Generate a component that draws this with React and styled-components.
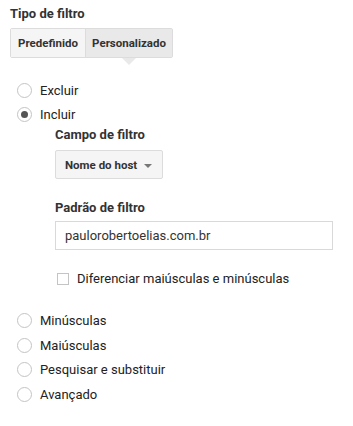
import React from 'react';
import styled, { createGlobalStyle } from 'styled-components';

const Global = createGlobalStyle`
  body {
    margin: 0;
    background: #fff;
    font-family: Roboto, "Liberation Sans", Arial, sans-serif;
    color: #222;
  }
`;

const Page = styled.div`
  width: 353px;
  padding: 6px 10px 0 10px;
  box-sizing: border-box;
`;

const Heading = styled.div`
  font-size: 13px;
  line-height: 16px;
  font-weight: 700;
  color: #333;
  margin-bottom: 6px;
`;

const TabGroup = styled.div`
  display: inline-flex;
  border: 1px solid #dcdcdc;
  border-radius: 2px;
`;

const Tab = styled.div`
  position: relative;
  width: ${p => p.$w}px;
  height: 28px;
  display: flex;
  align-items: center;
  justify-content: center;
  font-size: 11.5px;
  font-weight: 700;
  color: #333;
  background: ${p => (p.$active ? '#e9e9e9' : '#f5f5f5')};
  & + & {
    border-left: 1px solid #dcdcdc;
  }
  ${p => p.$active && `
    &::after {
      content: '';
      position: absolute;
      left: 50%;
      bottom: -8px;
      margin-left: -7px;
      border-left: 7px solid transparent;
      border-right: 7px solid transparent;
      border-top: 7px solid #e9e9e9;
    }
  `}
`;

const RadioList = styled.div`
  margin-top: 20px;
  display: flex;
  flex-direction: column;
`;

const RadioRow = styled.label`
  display: flex;
  align-items: center;
  height: 24.67px;
  font-size: 13px;
  color: #222;
`;

const RadioCircle = styled.span`
  width: 13px;
  height: 13px;
  border: 1px solid #c4c4c4;
  border-radius: 50%;
  margin: 0 8px 0 7px;
  display: flex;
  align-items: center;
  justify-content: center;
  &::after {
    content: '';
    width: 7px;
    height: 7px;
    border-radius: 50%;
    background: #555;
    display: ${p => (p.$checked ? 'block' : 'none')};
  }
`;

const Nested = styled.div`
  padding-left: 45px;
  padding-bottom: 22px;
`;

const FieldLabel = styled.div`
  font-size: 13px;
  line-height: 16px;
  font-weight: 700;
  color: #333;
  margin-top: ${p => p.$top || 0}px;
`;

const Select = styled.div`
  margin-top: 7px;
  width: 108px;
  height: 29px;
  box-sizing: border-box;
  border: 1px solid #dcdcdc;
  border-radius: 2px;
  background: #f5f5f5;
  display: flex;
  align-items: center;
  justify-content: space-between;
  padding: 0 10px 0 9px;
  font-size: 11.5px;
  font-weight: 700;
  color: #333;
`;

const Caret = styled.span`
  border-left: 4px solid transparent;
  border-right: 4px solid transparent;
  border-top: 4px solid #777;
  margin-top: 2px;
`;

const Input = styled.div`
  margin-top: 5px;
  width: 278px;
  height: 29px;
  box-sizing: border-box;
  border: 1px solid #d9d9d9;
  display: flex;
  align-items: center;
  padding-left: 9px;
  font-size: 13px;
  color: #333;
`;

const CheckRow = styled.div`
  margin-top: 21px;
  display: flex;
  align-items: center;
  font-size: 13px;
  color: #222;
`;

const CheckBox = styled.span`
  width: 12px;
  height: 12px;
  box-sizing: border-box;
  border: 1px solid #c4c4c4;
  margin: 0 8px 0 2px;
`;

export default function App() {
  return (
    <Page>
      <Global />
      <Heading>Tipo de filtro</Heading>
      <TabGroup>
        <Tab $w={74}>Predefinido</Tab>
        <Tab $w={86} $active>Personalizado</Tab>
      </TabGroup>
      <RadioList>
        <RadioRow><RadioCircle />Excluir</RadioRow>
        <RadioRow><RadioCircle $checked />Incluir</RadioRow>
        <Nested>
          <FieldLabel>Campo de filtro</FieldLabel>
          <Select>
            Nome do host
            <Caret />
          </Select>
          <FieldLabel $top={21}>Padrão de filtro</FieldLabel>
          <Input>paulorobertoelias.com.br</Input>
          <CheckRow>
            <CheckBox />
            Diferenciar maiúsculas e minúsculas
          </CheckRow>
        </Nested>
        <RadioRow><RadioCircle />Minúsculas</RadioRow>
        <RadioRow><RadioCircle />Maiúsculas</RadioRow>
        <RadioRow><RadioCircle />Pesquisar e substituir</RadioRow>
        <RadioRow><RadioCircle />Avançado</RadioRow>
      </RadioList>
    </Page>
  );
}
